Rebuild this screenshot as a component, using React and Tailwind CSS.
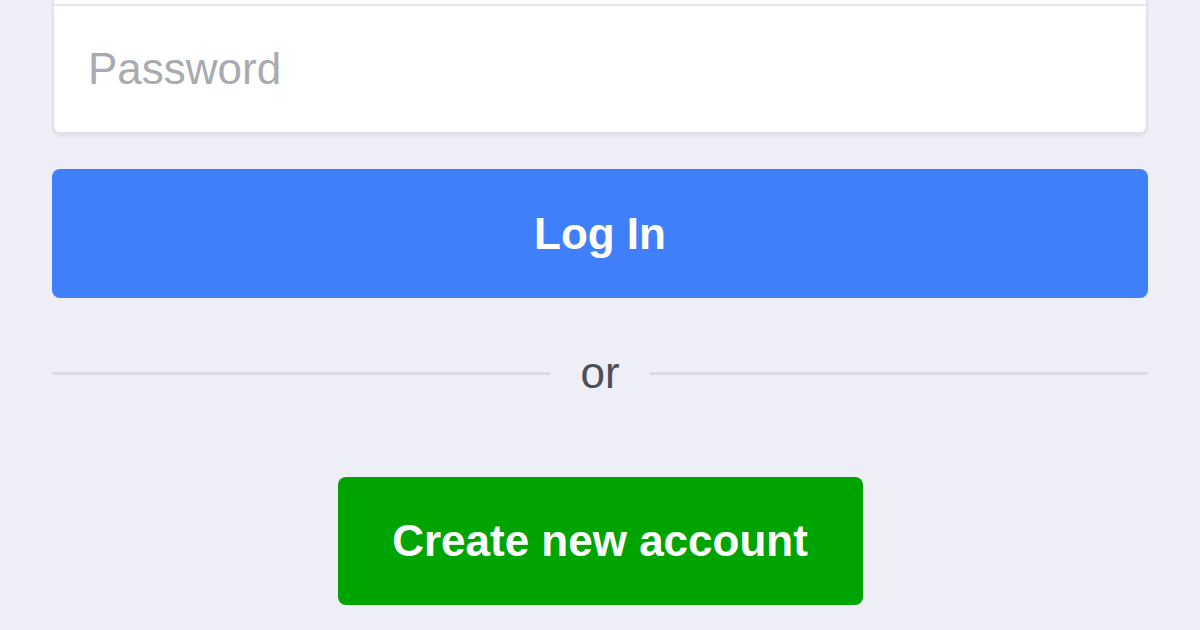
export default function App() {
  return (
    <div
      className="w-[1200px] h-[630px] overflow-hidden bg-[#edeef6] px-[52px]"
      style={{ fontFamily: '"Liberation Sans", Arial, sans-serif' }}
    >
      {/* Login fields (email field scrolled off the top) */}
      <div className="bg-white border-2 border-t-0 border-[#e0e1e6] rounded-b-lg shadow-[0_2px_2px_rgba(0,0,0,0.06)] overflow-hidden">
        <div className="h-[4px]" />
        <div className="h-[2px] bg-[#e6e7ec]" />
        <div className="h-[126px] flex items-center px-[34px] text-[44px] text-[#a8abb0]">
          Password
        </div>
      </div>

      {/* Log in button */}
      <button className="mt-[35px] w-full h-[129px] rounded-lg bg-[#3f80fa] text-white text-[44px] font-bold">
        Log In
      </button>

      {/* Divider */}
      <div className="mt-[50px] flex items-center gap-[30px]">
        <div className="flex-1 h-[3px] bg-[#dcdde3]" />
        <span className="text-[44px] leading-[50px] text-[#4b4f56]">or</span>
        <div className="flex-1 h-[3px] bg-[#dcdde3]" />
      </div>

      {/* Create account */}
      <div className="mt-[79px] flex justify-center">
        <button className="w-[525px] h-[128px] rounded-lg bg-[#00a400] text-white text-[44px] font-bold">
          Create new account
        </button>
      </div>
    </div>
  )
}
